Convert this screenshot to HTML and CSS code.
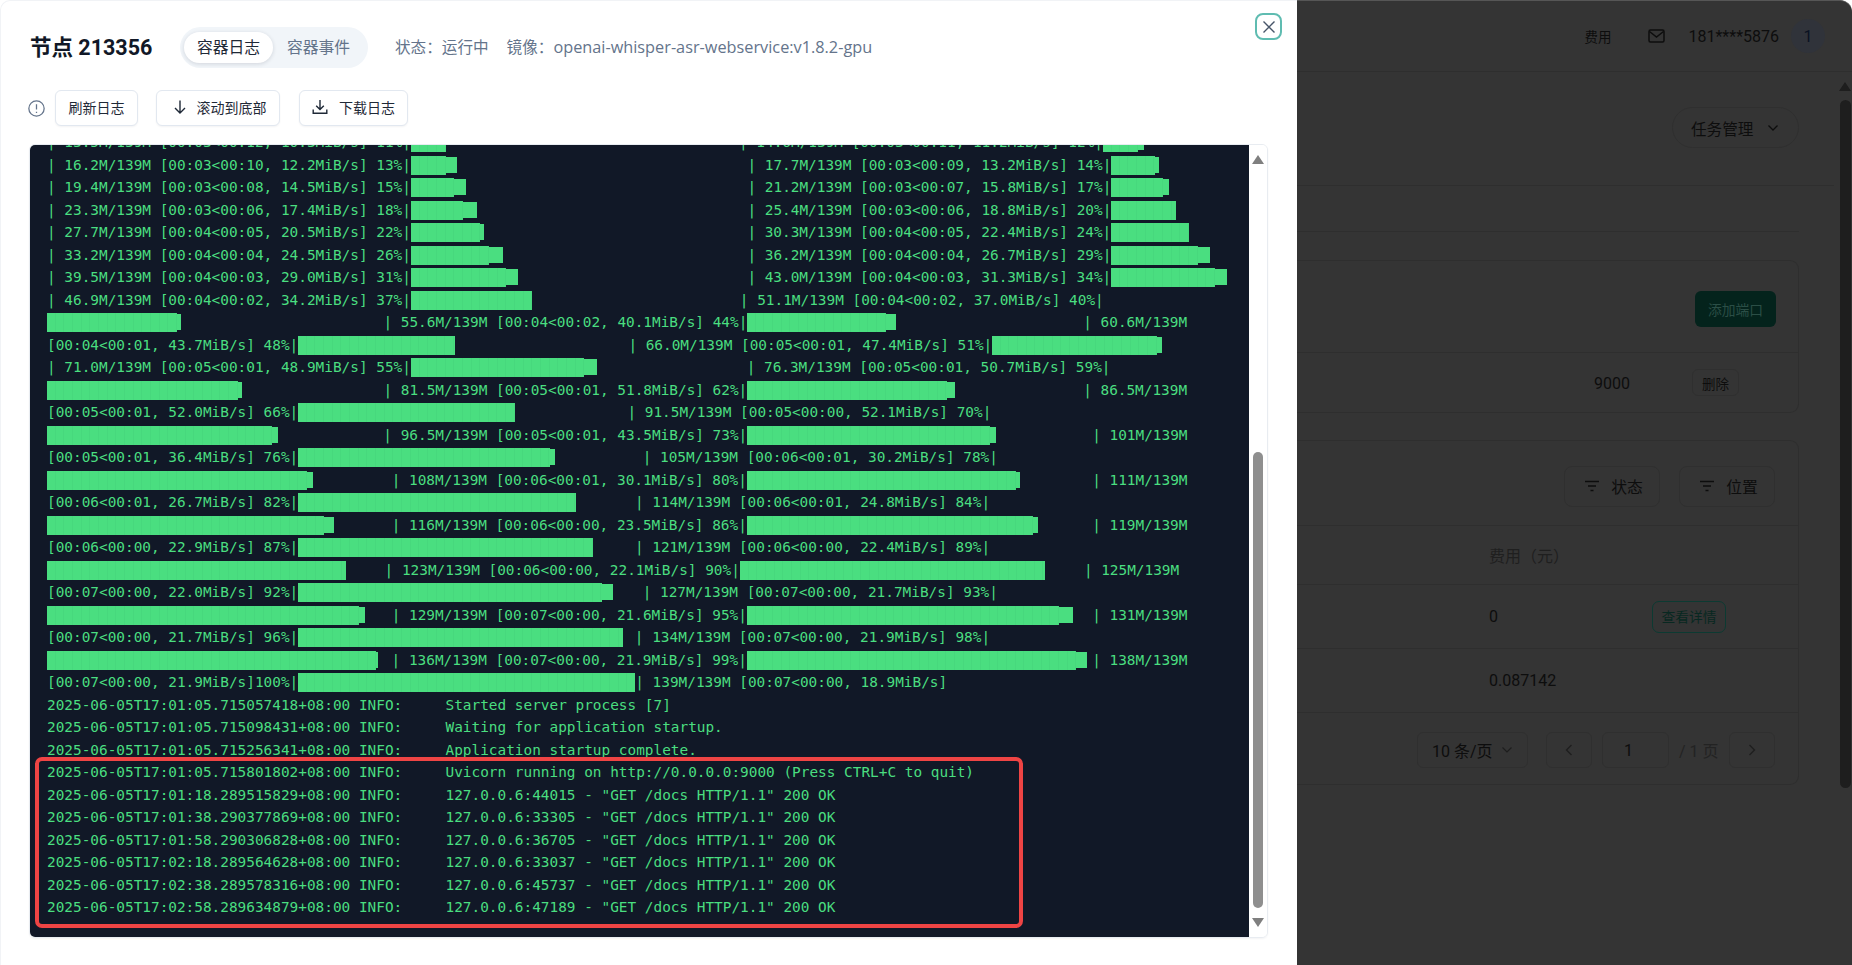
FILE: index.html
```html
<!DOCTYPE html>
<html lang="zh-CN">
<head>
<meta charset="utf-8">
<title>节点 213356</title>
<link rel="stylesheet" href="styles.css">
</head>
<body>
<div class="app">
  <aside class="modal">
    <button class="close" aria-label="关闭"><svg viewBox="0 0 14 14" width="14" height="14"><path d="M1.5 1.5l11 11M12.5 1.5l-11 11"/></svg></button>
    <header class="modal-head">
      <h1 class="title">节点 213356</h1>
      <div class="tabs"><span class="tab tab-on">容器日志</span><span class="tab">容器事件</span></div>
      <span class="meta">状态：运行中</span>
      <span class="meta">镜像：<span class="image-name">openai-whisper-asr-webservice:v1.8.2-gpu</span></span>
    </header>
    <div class="toolbar">
      <svg class="info" viewBox="0 0 16 16" width="17" height="17"><circle cx="8" cy="8" r="7.2"/><path d="M8 4v5M8 11v1.2"/></svg>
      <button class="btn">刷新日志</button>
      <button class="btn"><svg class="ic ic-down" viewBox="0 0 16 16" width="16" height="16"><path d="M8 1.5v12.5M3 9l5 5 5-5"/></svg>滚动到底部</button>
      <button class="btn"><svg class="ic" viewBox="0 0 16 16" width="16" height="16"><path d="M8 1v9.5M4.2 6.8L8 10.6l3.8-3.8M1.2 10.5v3.8h13.6v-3.8"/></svg>下载日志</button>
    </div>
    <div class="logbox">
      <div class="term">
        <div class="lines">
<div class="ln">| 13.5M/139M [00:03&lt;00:12, 10.3MiB/s] 11%|<i class="bar" style="--n:4"></i><span class="g" style="width:293.5px"></span>| 14.6M/139M [00:03&lt;00:11, 11.2MiB/s] 12%|<i class="bar" style="--n:4"></i><i class="cap" style="width:6px"></i></div>
<div class="ln">| 16.2M/139M [00:03&lt;00:10, 12.2MiB/s] 13%|<i class="bar" style="--n:4"></i><i class="cap" style="width:11.2px"></i><span class="g" style="width:290.7px"></span>| 17.7M/139M [00:03&lt;00:09, 13.2MiB/s] 14%|<i class="bar" style="--n:5"></i><i class="cap" style="width:4px"></i></div>
<div class="ln">| 19.4M/139M [00:03&lt;00:08, 14.5MiB/s] 15%|<i class="bar" style="--n:5"></i><i class="cap" style="width:11.6px"></i><span class="g" style="width:281.7px"></span>| 21.2M/139M [00:03&lt;00:07, 15.8MiB/s] 17%|<i class="bar" style="--n:6"></i><i class="cap" style="width:6px"></i></div>
<div class="ln">| 23.3M/139M [00:03&lt;00:06, 17.4MiB/s] 18%|<i class="bar" style="--n:6"></i><i class="cap" style="width:14px"></i><span class="g" style="width:270.6px"></span>| 25.4M/139M [00:03&lt;00:06, 18.8MiB/s] 20%|<i class="bar" style="--n:7.5"></i></div>
<div class="ln">| 27.7M/139M [00:04&lt;00:05, 20.5MiB/s] 22%|<i class="bar" style="--n:8"></i><i class="cap" style="width:3.5px"></i><span class="g" style="width:263.7px"></span>| 30.3M/139M [00:04&lt;00:05, 22.4MiB/s] 24%|<i class="bar" style="--n:9"></i></div>
<div class="ln">| 33.2M/139M [00:04&lt;00:04, 24.5MiB/s] 26%|<i class="bar" style="--n:9"></i><i class="cap" style="width:14px"></i><span class="g" style="width:244.6px"></span>| 36.2M/139M [00:04&lt;00:04, 26.7MiB/s] 29%|<i class="bar" style="--n:10"></i><i class="cap" style="width:12px"></i></div>
<div class="ln">| 39.5M/139M [00:04&lt;00:03, 29.0MiB/s] 31%|<i class="bar" style="--n:11"></i><i class="cap" style="width:11.5px"></i><span class="g" style="width:229.7px"></span>| 43.0M/139M [00:04&lt;00:03, 31.3MiB/s] 34%|<i class="bar" style="--n:12"></i><i class="cap" style="width:12px"></i></div>
<div class="ln">| 46.9M/139M [00:04&lt;00:02, 34.2MiB/s] 37%|<i class="bar" style="--n:14"></i><span class="g" style="width:207.7px"></span>| 51.1M/139M [00:04&lt;00:02, 37.0MiB/s] 40%|</div>
<div class="ln"><i class="bar" style="--n:15"></i><i class="cap" style="width:4px"></i><span class="g" style="width:202.5px"></span>| 55.6M/139M [00:04&lt;00:02, 40.1MiB/s] 44%|<i class="bar" style="--n:16"></i><i class="cap" style="width:9.7px"></i><span class="g" style="width:187.6px"></span>| 60.6M/139M</div>
<div class="ln">[00:04&lt;00:01, 43.7MiB/s] 48%|<i class="bar" style="--n:18.1"></i><span class="g" style="width:173.3px"></span>| 66.0M/139M [00:05&lt;00:01, 47.4MiB/s] 51%|<i class="bar" style="--n:19"></i><i class="cap" style="width:5.3px"></i></div>
<div class="ln">| 71.0M/139M [00:05&lt;00:01, 48.9MiB/s] 55%|<i class="bar" style="--n:20"></i><i class="cap" style="width:13.3px"></i><span class="g" style="width:149.2px"></span>| 76.3M/139M [00:05&lt;00:01, 50.7MiB/s] 59%|</div>
<div class="ln"><i class="bar" style="--n:22"></i><i class="cap" style="width:4.3px"></i><span class="g" style="width:141.5px"></span>| 81.5M/139M [00:05&lt;00:01, 51.8MiB/s] 62%|<i class="bar" style="--n:23"></i><i class="cap" style="width:8.8px"></i><span class="g" style="width:127.8px"></span>| 86.5M/139M</div>
<div class="ln">[00:05&lt;00:01, 52.0MiB/s] 66%|<i class="bar" style="--n:25"></i><span class="g" style="width:112.6px"></span>| 91.5M/139M [00:05&lt;00:00, 52.1MiB/s] 70%|</div>
<div class="ln"><i class="bar" style="--n:26"></i><i class="cap" style="width:5.6px"></i><span class="g" style="width:105.5px"></span>| 96.5M/139M [00:05&lt;00:01, 43.5MiB/s] 73%|<i class="bar" style="--n:28"></i><i class="cap" style="width:5.7px"></i><span class="g" style="width:96.7px"></span>| 101M/139M</div>
<div class="ln">[00:05&lt;00:01, 36.4MiB/s] 76%|<i class="bar" style="--n:29"></i><i class="cap" style="width:5.2px"></i><span class="g" style="width:88px"></span>| 105M/139M [00:06&lt;00:01, 30.2MiB/s] 78%|</div>
<div class="ln"><i class="bar" style="--n:30"></i><i class="cap" style="width:6px"></i><span class="g" style="width:78.8px"></span>| 108M/139M [00:06&lt;00:01, 30.1MiB/s] 80%|<i class="bar" style="--n:31"></i><i class="cap" style="width:4px"></i><span class="g" style="width:72.7px"></span>| 111M/139M</div>
<div class="ln">[00:06&lt;00:01, 26.7MiB/s] 82%|<i class="bar" style="--n:32"></i><span class="g" style="width:59.4px"></span>| 114M/139M [00:06&lt;00:01, 24.8MiB/s] 84%|</div>
<div class="ln"><i class="bar" style="--n:32"></i><i class="cap" style="width:9.6px"></i><span class="g" style="width:57.8px"></span>| 116M/139M [00:06&lt;00:00, 23.5MiB/s] 86%|<i class="bar" style="--n:33"></i><i class="cap" style="width:5.7px"></i><span class="g" style="width:53.7px"></span>| 119M/139M</div>
<div class="ln">[00:06&lt;00:00, 22.9MiB/s] 87%|<i class="bar" style="--n:34"></i><span class="g" style="width:42.1px"></span>| 121M/139M [00:06&lt;00:00, 22.4MiB/s] 89%|</div>
<div class="ln"><i class="bar" style="--n:34.5"></i><span class="g" style="width:38.7px"></span>| 123M/139M [00:06&lt;00:00, 22.1MiB/s] 90%|<i class="bar" style="--n:35.2"></i><span class="g" style="width:39.1px"></span>| 125M/139M</div>
<div class="ln">[00:07&lt;00:00, 22.0MiB/s] 92%|<i class="bar" style="--n:35"></i><i class="cap" style="width:11.2px"></i><span class="g" style="width:30px"></span>| 127M/139M [00:07&lt;00:00, 21.7MiB/s] 93%|</div>
<div class="ln"><i class="bar" style="--n:36"></i><i class="cap" style="width:6px"></i><span class="g" style="width:26.8px"></span>| 129M/139M [00:07&lt;00:00, 21.6MiB/s] 95%|<i class="bar" style="--n:36"></i><i class="cap" style="width:13.7px"></i><span class="g" style="width:19.7px"></span>| 131M/139M</div>
<div class="ln">[00:07&lt;00:00, 21.7MiB/s] 96%|<i class="bar" style="--n:37.5"></i><span class="g" style="width:11.7px"></span>| 134M/139M [00:07&lt;00:00, 21.9MiB/s] 98%|</div>
<div class="ln"><i class="bar" style="--n:38"></i><i class="cap" style="width:1.6px"></i><span class="g" style="width:13.8px"></span>| 136M/139M [00:07&lt;00:00, 21.9MiB/s] 99%|<i class="bar" style="--n:38"></i><i class="cap" style="width:11.4px"></i><span class="g" style="width:4.7px"></span>| 138M/139M</div>
<div class="ln">[00:07&lt;00:00, 21.9MiB/s]100%|<i class="bar" style="--n:38.9"></i>| 139M/139M [00:07&lt;00:00, 18.9MiB/s]</div>
<div class="ln">2025-06-05T17:01:05.715057418+08:00 INFO:     Started server process [7]</div>
<div class="ln">2025-06-05T17:01:05.715098431+08:00 INFO:     Waiting for application startup.</div>
<div class="ln">2025-06-05T17:01:05.715256341+08:00 INFO:     Application startup complete.</div>
<div class="ln">2025-06-05T17:01:05.715801802+08:00 INFO:     Uvicorn running on http://0.0.0.0:9000 (Press CTRL+C to quit)</div>
<div class="ln">2025-06-05T17:01:18.289515829+08:00 INFO:     127.0.0.6:44015 - "GET /docs HTTP/1.1" 200 OK</div>
<div class="ln">2025-06-05T17:01:38.290377869+08:00 INFO:     127.0.0.6:33305 - "GET /docs HTTP/1.1" 200 OK</div>
<div class="ln">2025-06-05T17:01:58.290306828+08:00 INFO:     127.0.0.6:36705 - "GET /docs HTTP/1.1" 200 OK</div>
<div class="ln">2025-06-05T17:02:18.289564628+08:00 INFO:     127.0.0.6:33037 - "GET /docs HTTP/1.1" 200 OK</div>
<div class="ln">2025-06-05T17:02:38.289578316+08:00 INFO:     127.0.0.6:45737 - "GET /docs HTTP/1.1" 200 OK</div>
<div class="ln">2025-06-05T17:02:58.289634879+08:00 INFO:     127.0.0.6:47189 - "GET /docs HTTP/1.1" 200 OK</div>
        </div>
        <div class="redframe"></div>
      </div>
      <div class="sbar">
        <span class="arrow-up"></span>
        <span class="sthumb"></span>
        <span class="arrow-down"></span>
      </div>
    </div>
  </aside>

  <main class="page">
    <div class="topbar">
      <span class="nav-fee">费用</span>
      <svg class="mail" viewBox="0 0 17 14" width="17" height="14"><rect x="1" y="1" width="15" height="12" rx="1.5"/><path d="M1.5 2.5L8.5 8l7-5.5"/></svg>
      <span class="phone">181****5876</span>
      <span class="avatar">1</span>
    </div>
    <div class="body">
      <div class="content">
        <div class="head-row"><button class="task">任务管理<svg viewBox="0 0 12 8" width="12" height="8"><path d="M1.5 1.5L6 6l4.5-4.5"/></svg></button></div>
        <div class="sub-row"></div>
        <section class="card card-ports">
          <div class="ports-head"><button class="add">添加端口</button></div>
          <div class="ports-row"><span class="port">9000</span><button class="del">删除</button></div>
        </section>
        <section class="card card-table">
          <div class="filters">
            <button class="filter"><svg viewBox="0 0 16 12" width="16" height="12"><path d="M1 1.5h14M4 6h8M6.5 10.5h3"/></svg>状态</button>
            <button class="filter filter-b"><svg viewBox="0 0 16 12" width="16" height="12"><path d="M1 1.5h14M4 6h8M6.5 10.5h3"/></svg>位置</button>
          </div>
          <div class="tr th"><span></span><span>费用（元）</span></div>
          <div class="tr tr-body"><span></span><span>0</span><button class="detail">查看详情</button></div>
          <div class="tr tr-body"><span></span><span>0.087142</span></div>
          <div class="pager">
            <span class="select">10 条/页<svg viewBox="0 0 12 8" width="12" height="8"><path d="M1.5 1.5L6 6l4.5-4.5"/></svg></span>
            <span class="pbox"><svg viewBox="0 0 8 12" width="8" height="12"><path d="M6.5 1L1.5 6l5 5"/></svg></span>
            <span class="pinput">1</span>
            <span class="ptotal">/ 1 页</span>
            <span class="pbox"><svg viewBox="0 0 8 12" width="8" height="12"><path d="M1.5 1l5 5-5 5"/></svg></span>
          </div>
        </section>
      </div>
      <div class="page-sbar"><span class="page-up"></span><span class="page-thumb"></span></div>
    </div>
  </main>
</div>
</body>
</html>
```

FILE: styles.css
```css
* { box-sizing: border-box; }
html, body { margin: 0; height: 100%; background: #fff; overflow: hidden; }
body { font-family: Roboto, "Noto Sans CJK SC", sans-serif; font-size: 16px; }
button { font: inherit; cursor: default; background: none; }
h1 { margin: 0; }
svg { fill: none; stroke: currentColor; flex: none; }

.app { display: flex; width: 1852px; height: 965px; }

/* modal */
.modal { position: relative; flex: none; width: 1297px; height: 965px; background: #fff; display: flex; flex-direction: column; border-radius: 10px 0 0 0; border-top: 1px solid #f1f3f6; border-left: 1px solid #f1f3f6; }
.close { position: absolute; left: 1254px; top: 12px; width: 27px; height: 27px; padding: 0; border: 2.5px solid #5fbcb1; border-radius: 8px; background: #fff; display: flex; align-items: center; justify-content: center; color: #475569; }
.close svg { stroke-width: 1.4; }

.modal-head { display: flex; align-items: center; padding: 26px 0 0 29px; height: 67px; }
.title { font-size: 21.5px; font-weight: 700; color: #111827; line-height: 41px; width: 122px; margin-right: 28px; white-space: nowrap; }
.tabs { display: flex; flex: none; width: 188px; height: 41px; padding: 5px 4px; background: #f1f5f9; border-radius: 21px; margin-right: 27px; }
.tab { flex: none; width: 91px; height: 31px; line-height: 31px; text-align: center; color: #64748b; border-radius: 16px; font-size: 15.8px; }
.tab-on { width: 89px; color: #1f2937; background: #fff; box-shadow: 0 1px 4px rgba(15, 23, 42, .14); }
.meta { color: #64748b; font-family: "Open Sans", "Noto Sans CJK SC", sans-serif; font-size: 15.6px; margin-right: 18px; padding-bottom: 3px; white-space: nowrap; }
.image-name { font-size: 16.3px; }

.toolbar { display: flex; align-items: center; margin: 22px 0 0 27px; height: 36px; }
.info { color: #64748b; stroke-width: 1.2; margin-right: 10px; }
.btn { display: flex; align-items: center; justify-content: center; height: 36px; padding: 0 13px 2px; margin-right: 19px; font-size: 14px; color: #1f2937; background: #fff; border: 1px solid #e2e8f0; border-radius: 6px; box-shadow: 0 1px 2px rgba(15, 23, 42, .05); white-space: nowrap; }
.btn:nth-of-type(1) { width: 83px; margin-right: 18px; }
.btn:nth-of-type(2) { width: 124px; }
.btn:nth-of-type(3) { width: 109px; }
.ic { margin-right: 11px; stroke-width: 1.4; color: #1f2937; }
.ic-down { margin-left: 2px; margin-right: 9px; }

.logbox { display: flex; width: 1239px; height: 794px; margin: 18px 0 0 28px; border: 1px solid #e8ecf1; border-radius: 6px; overflow: hidden; box-shadow: 0 1px 2px rgba(15, 23, 42, .05); }
.term { position: relative; flex: none; width: 1219px; height: 792px; background: #111827; overflow: hidden; padding-left: 17px; color: #4ade80; font-family: "DejaVu Sans Mono", monospace; font-size: 14.4px; }
.lines { margin-top: -13.7px; }
.ln { height: 22.5px; line-height: 22.5px; white-space: pre; }
.bar { display: inline-block; vertical-align: top; margin-top: 1.7px; height: 19px; width: calc(var(--n) * 1ch); background: repeating-linear-gradient(90deg, #4ade80 0, #4ade80 calc(1ch - 1px), #47d87d calc(1ch - 1px), #47d87d 1ch); }
.cap { display: inline-block; vertical-align: top; margin-top: 2.7px; height: 16px; background: #4ade80; }
.g { display: inline-block; }
.redframe { position: absolute; left: 5px; top: 612px; width: 988px; height: 171px; border: 4px solid #ef4444; border-radius: 7px; pointer-events: none; }

.sbar { flex: 1; display: flex; flex-direction: column; align-items: center; background: #fff; }
.arrow-up { margin-top: 10px; width: 0; height: 0; border-left: 6.5px solid transparent; border-right: 6.5px solid transparent; border-bottom: 9px solid #7f7f7f; }
.sthumb { margin-top: 288px; width: 10px; height: 456px; background: #8f8f8f; border-radius: 5px; }
.arrow-down { margin-top: 10px; width: 0; height: 0; border-left: 6.5px solid transparent; border-right: 6.5px solid transparent; border-top: 9px solid #7f7f7f; }

/* dimmed page */
.page { flex: 1; min-width: 0; height: 965px; background: #343434; border-top: 1px solid #565656; border-top-right-radius: 12px; display: flex; flex-direction: column; color: #0d0d0d; }
.topbar { display: flex; align-items: center; justify-content: flex-end; height: 71px; padding-right: 27px; border-bottom: 1px solid #2e2e2e; flex: none; }
.nav-fee { font-size: 13.5px; margin-right: 37px; }
.mail { stroke-width: 1.5; margin-right: 23px; }
.phone { font-size: 16px; margin-right: 12px; }
.avatar { width: 34px; height: 34px; border-radius: 50%; background: #30333a; display: flex; align-items: center; justify-content: center; color: #0a1222; font-size: 16px; }

.body { flex: 1; display: flex; min-height: 0; }
.content { flex: none; width: 537px; }
.head-row { height: 114px; padding: 35px 35px 0 0; display: flex; justify-content: flex-end; align-items: flex-start; border-bottom: 1px solid #2e2e2e; }
.task { display: flex; align-items: center; width: 127px; height: 41px; padding: 0 0 0 18px; border: 1px solid #2f2f2f; border-radius: 21px; color: #0d0d0d; font-size: 15.6px; white-space: nowrap; }
.task svg { margin-left: 14px; stroke-width: 1.3; }
.sub-row { height: 46px; width: 502px; border-bottom: 1px solid #2e2e2e; }
.card { width: 502px; border: 1px solid #2e2e2e; border-left: 0; border-radius: 0 9px 9px 0; }
.card-ports { margin-top: 28px; height: 153px; }
.ports-head { height: 92px; padding: 30px 22px 0 0; display: flex; justify-content: flex-end; border-bottom: 1px solid #2e2e2e; }
.add { width: 81px; height: 36px; padding: 0; border: 0; border-radius: 6px; background: #04231c; color: #2b4e46; font-size: 13.8px; white-space: nowrap; }
.ports-row { display: flex; align-items: center; height: 59px; padding-left: 297px; }
.port { width: 98px; padding-top: 1px; }
.del { width: 47px; height: 27px; padding: 0; border: 1px solid #2f2f2f; border-radius: 6px; color: #0d0d0d; font-size: 13.5px; }

.card-table { margin-top: 27px; height: 345px; }
.filters { height: 85px; padding: 25px 22px 0 0; display: flex; justify-content: flex-end; border-bottom: 1px solid #2e2e2e; }
.filter { display: flex; align-items: center; justify-content: center; width: 96px; height: 41px; padding: 0 0 1px 3px; border: 1px solid #2f2f2f; border-radius: 8px; color: #0d0d0d; margin-right: 19px; font-size: 15.8px; white-space: nowrap; }
.filter-b { margin-right: 1px; }
.filter svg { margin-right: 11px; stroke-width: 1.3; }
.tr { display: grid; grid-template-columns: 192px 163px 1fr; align-items: center; border-bottom: 1px solid #2e2e2e; }
.th { height: 59px; color: #1f1f1f; }
.tr-body { height: 64px; }
.detail { width: 74px; height: 32px; padding: 0 0 1px; border: 1px solid #0c3a32; border-radius: 7px; color: #082821; font-size: 13.8px; white-space: nowrap; }
.pager { display: flex; align-items: center; padding: 19px 0 0 120px; }
.select { display: flex; align-items: center; width: 111px; height: 36px; padding-left: 14px; border: 1px solid #2f2f2f; border-radius: 6px; white-space: nowrap; }
.select svg { margin-left: 8px; color: #1e1e1e; stroke-width: 1.2; }
.pbox { width: 46px; height: 36px; border: 1px solid #2f2f2f; border-radius: 6px; margin-left: 18px; display: flex; align-items: center; justify-content: center; color: #1e1e1e; }
.pbox svg { stroke-width: 1.3; }
.pinput { width: 67px; height: 36px; line-height: 36px; padding-left: 21px; border: 1px solid #2f2f2f; border-radius: 6px; margin-left: 10px; }
.ptotal { margin-left: 10px; width: 40px; color: #232323; white-space: nowrap; }
.ptotal + .pbox { margin-left: 10px; }

.page-sbar { flex: 1; position: relative; display: flex; flex-direction: column; align-items: center; padding-left: 4px; }
.page-up { margin-top: 10px; width: 0; height: 0; border-left: 6px solid transparent; border-right: 6px solid transparent; border-bottom: 9px solid #1e1e1e; }
.page-thumb { margin-top: 9px; width: 11px; height: 688px; background: #1e1e1e; border-radius: 6px; }
```
